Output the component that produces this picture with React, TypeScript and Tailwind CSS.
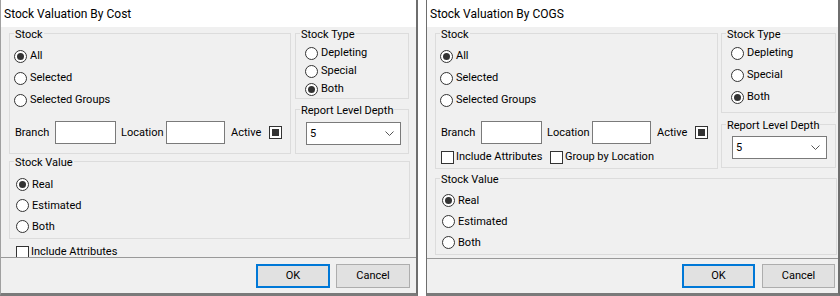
import React, { ReactNode } from 'react';

const Radio = ({ label, checked, className = '' }: { label: string; checked?: boolean; className?: string }) => (
  <div className={`flex items-center ${className}`}>
    <span className="w-[13px] h-[13px] rounded-full border border-[#333] bg-white flex items-center justify-center shrink-0">
      {checked && <span className="w-[7px] h-[7px] rounded-full bg-[#333]" />}
    </span>
    <span className="ml-[3px] leading-[14px]">{label}</span>
  </div>
);

const Check = ({ label, checked }: { label?: string; checked?: boolean }) => (
  <div className="flex items-center">
    <span className="w-[13px] h-[13px] border border-[#333] bg-white flex items-center justify-center shrink-0">
      {checked && <span className="w-[7px] h-[7px] bg-[#333]" />}
    </span>
    {label && <span className="ml-[2px] leading-[14px]">{label}</span>}
  </div>
);

const Group = ({ title, className = '', children }: { title: string; className?: string; children?: ReactNode }) => (
  <div className={`relative border border-[#dcdcdc] shrink-0 ${className}`}>
    <span className="absolute -top-[6px] left-[4px] px-px bg-[#f0f0f0] leading-[14px] whitespace-nowrap">{title}</span>
    {children}
  </div>
);

const Select = () => (
  <div className="w-[95px] h-[23px] bg-white border border-[#7a7a7a] flex items-center justify-between pl-[3px] pr-[6px]">
    <span className="leading-[14px]">5</span>
    <svg width="9" height="5" viewBox="0 0 9 5">
      <polyline points="0.5,0.5 4.5,4.5 8.5,0.5" fill="none" stroke="#555" strokeWidth="1" />
    </svg>
  </div>
);

const BranchRow = () => (
  <div className="flex items-center h-[23px] pl-[5px] mt-[10px]">
    <span className="w-[40px] leading-[14px]">Branch</span>
    <span className="w-[61px] h-[23px] bg-white border border-[#7a7a7a]" />
    <span className="w-[50px] pl-[5px] leading-[14px]">Location</span>
    <span className="w-[59px] h-[23px] bg-white border border-[#7a7a7a]" />
    <span className="w-[44px] pl-[6px] leading-[14px]">Active</span>
    <Check checked />
  </div>
);

const StockRadios = () => (
  <div className="pt-[11px] pl-[4px]">
    <Radio label="All" checked className="h-[22px]" />
    <Radio label="Selected" className="h-[22px]" />
    <Radio label="Selected Groups" className="h-[22px]" />
  </div>
);

const Footer = ({ narrow }: { narrow?: boolean }) => (
  <div className={`flex-1 bg-[#f0f0f0] border-t border-[#999] flex justify-end items-start ${narrow ? 'pt-[5px] pr-[3px] gap-[7px]' : 'pt-[6px] pr-[6px] gap-[6px]'}`}>
    <button className={`${narrow ? 'w-[73px]' : 'w-[74px]'} h-[24px] bg-[#e1e1e1] border-2 border-[#0078d7]`}>OK</button>
    <button className={`${narrow ? 'w-[73px]' : 'w-[74px]'} h-[24px] bg-[#e1e1e1] border border-[#adadad]`}>Cancel</button>
  </div>
);

const CostDialog = () => (
  <div className="w-[418px] h-[296px] flex flex-col border-l border-l-[#a0a0a0] border-r-2 border-r-[#6e6e6e] border-b-[3px] border-b-[#7a7a7a] shrink-0">
    <div className="h-[27px] bg-white flex items-center pl-[3px] text-[12px]">Stock Valuation By Cost</div>
    <div className="h-[230px] bg-[#f0f0f0] overflow-hidden pl-[8px] pt-[6px]">
      <div className="flex">
        <Group title="Stock" className="w-[282px] h-[121px]">
          <StockRadios />
          <BranchRow />
        </Group>
        <div className="ml-[4px] w-[114px] flex flex-col">
          <Group title="Stock Type" className="h-[66px] pt-[10px] pl-[9px]">
            <Radio label="Depleting" className="h-[18px]" />
            <Radio label="Special" className="h-[18px]" />
            <Radio label="Both" checked className="h-[18px]" />
          </Group>
          <Group title="Report Level Depth" className="mt-[10px] h-[45px] pt-[12px] pl-[10px]">
            <Select />
          </Group>
        </div>
      </div>
      <Group title="Stock Value" className="mt-[7px] w-[401px] h-[78px] pt-[12px] pl-[6px]">
        <Radio label="Real" checked className="h-[21px]" />
        <Radio label="Estimated" className="h-[21px]" />
        <Radio label="Both" className="h-[21px]" />
      </Group>
      <div className="mt-[6px] pl-[7px]">
        <Check label="Include Attributes" />
      </div>
    </div>
    <Footer />
  </div>
);

const CogsDialog = () => (
  <div className="w-[414px] h-[296px] flex flex-col border-l border-l-[#6e6e6e] border-r-2 border-r-[#6e6e6e] border-b-[3px] border-b-[#7a7a7a] shrink-0">
    <div className="h-[27px] bg-white flex items-center pl-[3px] text-[12px]">Stock Valuation By COGS</div>
    <div className="h-[231px] bg-[#f0f0f0] overflow-hidden pl-[8px] pt-[6px]">
      <div className="flex">
        <Group title="Stock" className="w-[283px] h-[136px]">
          <StockRadios />
          <BranchRow />
          <div className="flex items-center mt-[6px] pl-[5px]">
            <div className="w-[109px]">
              <Check label="Include Attributes" />
            </div>
            <Check label="Group by Location" />
          </div>
        </Group>
        <div className="ml-[3px] w-[115px] flex flex-col">
          <Group title="Stock Type" className="h-[80px] pt-[8px] pl-[9px]">
            <Radio label="Depleting" className="h-[22px]" />
            <Radio label="Special" className="h-[22px]" />
            <Radio label="Both" checked className="h-[22px]" />
          </Group>
          <Group title="Report Level Depth" className="mt-[11px] h-[44px] pt-[11px] pl-[10px]">
            <Select />
          </Group>
        </div>
      </div>
      <Group title="Stock Value" className="mt-[9px] w-[402px] h-[77px] pt-[11px] pl-[6px]">
        <Radio label="Real" checked className="h-[21px]" />
        <Radio label="Estimated" className="h-[21px]" />
        <Radio label="Both" className="h-[21px]" />
      </Group>
    </div>
    <Footer narrow />
  </div>
);

export default function App() {
  return (
    <div className="w-[840px] h-[296px] bg-white flex gap-[8px] overflow-hidden text-[11px] text-black" style={{ fontFamily: 'Roboto, "Liberation Sans", sans-serif' }}>
      <CostDialog />
      <CogsDialog />
    </div>
  );
}
